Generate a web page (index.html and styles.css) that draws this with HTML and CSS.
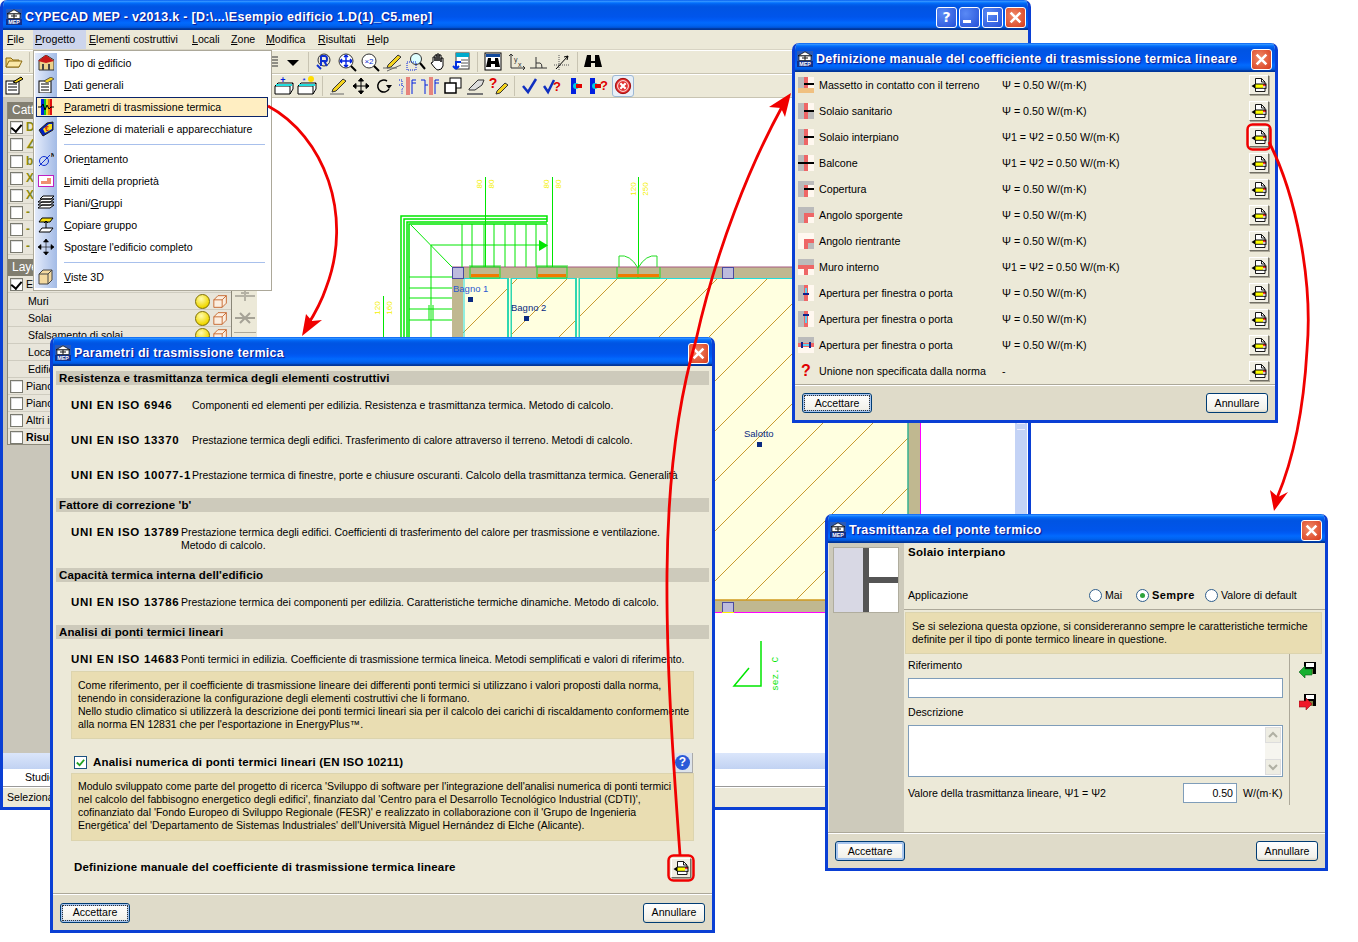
FILE: index.html
```html
<!DOCTYPE html>
<html lang="it">
<head>
<meta charset="utf-8">
<title>CYPECAD MEP</title>
<link rel="stylesheet" href="styles.css">
</head>
<body>
<svg class="defs" width="0" height="0">
  <defs>
    <symbol id="logo" viewBox="0 0 16 16">
      <rect x="0" y="0" width="16" height="16" fill="#2a5ab8"/>
      <path d="M8 .8 15 4.8H1Z" fill="#fff" stroke="#111" stroke-width=".8"/>
      <rect x="2" y="5" width="12" height="4.500" fill="#fff" stroke="#111" stroke-width=".7"/>
      <path d="M8 5v4.500M5 7h6" stroke="#111" stroke-width="1"/>
      <rect x="0" y="10" width="16" height="6" fill="#12308a"/>
      <text x="8" y="15" text-anchor="middle" font-family="Liberation Sans" font-size="5.400" font-weight="700" fill="#fff">MEP</text>
    </symbol>
    <symbol id="pen" viewBox="0 0 18 18">
      <path d="M5.500 2.500H11.500L15 6V15.500H5.500Z" fill="#fff" stroke="#000" stroke-width=".9"/>
      <path d="M11.500 2.500V6H15" fill="none" stroke="#000" stroke-width=".9"/>
      <path d="M1.500 10 5.500 7.500H16.500V12.800H5.500Z" fill="#000"/>
      <rect x="5.500" y="8.500" width="7.500" height="3.300" fill="#ff0"/>
      <rect x="13" y="8.500" width="2.500" height="1.700" fill="#f33"/>
      <rect x="13" y="10.200" width="2.500" height="1.600" fill="#fff"/>
    </symbol>
    <symbol id="cube" viewBox="0 0 18 18">
      <path d="M1 7 6 2H16V11L11 16H1Z" fill="#fbeee0" stroke="#c0581a"/>
      <path d="M1 7H11V16M11 7 16 2" fill="none" stroke="#c0581a"/>
    </symbol>
    <symbol id="tbh" viewBox="0 0 16 16">
      <rect width="16" height="16" fill="#fff8f0"/><rect width="6" height="16" fill="#bbb"/>
      <rect x="6" width="4" height="16" fill="#ee6666"/><rect x="6" y="7" width="10" height="2" fill="#000"/>
    </symbol>
    <symbol id="dlsave" viewBox="0 0 18 18">
      <rect x="5" y="1" width="12" height="12" fill="#000"/><rect x="7" y="2" width="8" height="4" fill="#fff"/><rect x="8" y="8" width="6" height="5" fill="#808040"/>
    </symbol>
    <symbol id="xmark" viewBox="0 0 12 12">
      <path d="M1.500 1.500 10.500 10.500M10.500 1.500 1.500 10.500" stroke="#fff" stroke-width="2.400" fill="none"/>
    </symbol>
  </defs>
</svg>

<main class="desktop">

  <!-- Main application window -->
  <section class="window main-win">
    <header class="titlebar main-title">
      <svg class="logo"><use href="#logo"/></svg>
      <span class="title-text">CYPECAD MEP - v2013.k - [D:\...\Esempio edificio 1.D(1)_C5.mep]</span>
      <span class="wbtns">
        <span class="wbtn blue">?</span>
        <span class="wbtn blue"><i class="min-g"></i></span>
        <span class="wbtn blue"><i class="max-g"></i></span>
        <span class="wbtn close"><svg class="xm"><use href="#xmark"/></svg></span>
      </span>
    </header>
    <nav class="menubar">
      <span class="mi m-file"><u>F</u>ile</span>
      <span class="mi m-prog active"><u>P</u>rogetto</span>
      <span class="mi m-elem"><u>E</u>lementi costruttivi</span>
      <span class="mi m-loc"><u>L</u>ocali</span>
      <span class="mi m-zone"><u>Z</u>one</span>
      <span class="mi m-mod"><u>M</u>odifica</span>
      <span class="mi m-ris"><u>R</u>isultati</span>
      <span class="mi"><u>H</u>elp</span>
    </nav>
    <div class="toolbar">
      <svg class="ti" viewBox="0 0 20 20"><path d="M2 6H7L9 8H15V15H2Z" fill="#f5d77a" stroke="#8a6a10"/><path d="M2 15 5 9H18L15 15Z" fill="#fbe9a8" stroke="#8a6a10"/></svg>
      <span class="sep"></span>
      <span class="tb-spacer1"></span>
      <svg class="ti narrow" viewBox="0 0 14 20"><path d="M0 5H12M0 8H12M0 11H12M0 14H12" stroke="#333"/></svg>
      <svg class="ti drop" viewBox="0 0 20 20"><path d="M4 8H16L10 14Z" fill="#000"/></svg>
      <span class="sep"></span>
      <svg class="ti" viewBox="0 0 20 20"><circle cx="10" cy="8" r="6" fill="none" stroke="#333"/><path d="M7 4V14M7 4H11Q13 4 13 7T11 9H7M10 9 13 14" fill="none" stroke="#1030d0" stroke-width="2"/><path d="M7 17 3 13" stroke="#1030d0" stroke-width="2"/></svg>
      <svg class="ti" viewBox="0 0 20 20"><circle cx="9" cy="9" r="7" fill="#fff" stroke="#333"/><path d="M9 3V15M3 9H15M9 3 7 5M9 3l2 2M9 15l-2-2M9 15l2-2M3 9l2-2M3 9l2 2M15 9l-2-2M15 9l-2 2" stroke="#0020e0" stroke-width="1.400" fill="none"/><path d="M14 14 19 19" stroke="#000" stroke-width="2"/></svg>
      <svg class="ti" viewBox="0 0 20 20"><circle cx="9" cy="9" r="7" fill="#fff" stroke="#333"/><text x="9" y="12" text-anchor="middle" font-family="Liberation Sans" font-size="8" fill="#1030d0">×2</text><path d="M14 14 19 19" stroke="#000" stroke-width="2"/></svg>
      <svg class="ti" viewBox="0 0 20 20"><path d="M5 13 15 3 18 5 8 15 4 16Z" fill="#f3d21e" stroke="#333"/><path d="M0 16H14M4 19 18 13" stroke="#666"/></svg>
      <svg class="ti" viewBox="0 0 20 20"><circle cx="10" cy="7" r="5.500" fill="#dff" stroke="#333"/><path d="M14 11 19 17" stroke="#000" stroke-width="2"/><rect x="1" y="10" width="9" height="8" fill="none" stroke="#0020e0" stroke-dasharray="1 1"/></svg>
      <svg class="ti" viewBox="0 0 20 20"><path d="M4 10V5h2v4V3h2v6V2h2v7V3h2v7V6h2v8q-1 4-5 4H9Q7 18 2 11Z" fill="#fff" stroke="#000"/></svg>
      <svg class="ti" viewBox="0 0 20 20"><rect x="4" y="1" width="13" height="16" fill="#fff" stroke="#333"/><rect x="4" y="1" width="13" height="4" fill="#0ac"/><path d="M9 8H16M9 11H16M9 14H16" stroke="#555"/><path d="M9 10H4V17M4 17 1 14M4 17 7 14" fill="none" stroke="#0030e0" stroke-width="2"/></svg>
      <span class="sep"></span>
      <svg class="ti" viewBox="0 0 20 20"><rect x="2" y="1" width="16" height="17" fill="#fff" stroke="#000"/><rect x="3" y="2" width="14" height="3" fill="#124a9c"/><path d="M5 6H8V9H12V6H15L17 15H12V12H8V15H3Z" fill="#000"/></svg>
      <svg class="ti" viewBox="0 0 20 20"><path d="M5 2V16H19M3 4 5 2l2 2M17 14l2 2-2 2" fill="none" stroke="#333"/><text x="8" y="10" font-family="Liberation Sans" font-size="7" fill="#333">y</text><text x="12" y="15" font-family="Liberation Sans" font-size="7" fill="#333">x</text></svg>
      <svg class="ti" viewBox="0 0 20 20"><path d="M1 16H18M7 5V16M7 11H11Q13 11 13 16" fill="none" stroke="#333"/></svg>
      <svg class="ti" viewBox="0 0 20 20"><path d="M2 13H18M7 3V18" stroke="#555" stroke-dasharray="1 1"/><path d="M4 17 16 4M16 4l-4 1M16 4l-1 4" stroke="#000" fill="none"/></svg>
      <span class="sep"></span>
      <svg class="ti" viewBox="0 0 20 20"><path d="M4 3H8V9H12V3H16L19 15H12V11H8V15H1Z" fill="#000"/></svg>
    </div>
    <div class="toolbar second">
      <svg class="ti" viewBox="0 0 20 20"><rect x="2" y="5" width="13" height="13" fill="#fff" stroke="#000"/><path d="M4 8H13M4 11H13M4 14H13" stroke="#000"/><path d="M9 6 17 1 19 3 12 7Z" fill="#f3d21e" stroke="#000"/></svg>
      <span class="tb-spacer2"></span>
      <svg class="ti" viewBox="0 0 20 20"><text x="9" y="7" text-anchor="middle" font-family="Liberation Sans" font-size="9" font-weight="700" fill="#0020e0">+</text><path d="M1 10 4 7H19V13L16 18H1Z" fill="#fff" stroke="#000"/><path d="M1 10H16V18M16 10 19 7" fill="none" stroke="#000"/><rect x="2" y="8" width="16" height="2" fill="#22dddd"/></svg>
      <svg class="ti" viewBox="0 0 20 20"><circle cx="14" cy="3" r="3" fill="#fd0"/><text x="7" y="7" text-anchor="middle" font-family="Liberation Sans" font-size="8" fill="#0020e0">*</text><path d="M1 10 4 7H19V13L16 18H1Z" fill="#fff" stroke="#000"/><path d="M1 10H16V18M16 10 19 7" fill="none" stroke="#000"/><rect x="2" y="8" width="16" height="2" fill="#22dddd"/></svg>
      <span class="sep"></span>
      <svg class="ti" viewBox="0 0 20 20"><path d="M5 13 15 3 18 5 8 15 4 16Z" fill="#f3d21e" stroke="#333"/><path d="M2 18H16" stroke="#666"/></svg>
      <svg class="ti" viewBox="0 0 20 20"><path d="M10 2V18M2 10H18M10 2 7.500 5H12.500ZM10 18 7.500 15H12.500ZM2 10 5 7.500V12.500ZM18 10 15 7.500V12.500Z" fill="#000" stroke="#000"/></svg>
      <svg class="ti" viewBox="0 0 20 20"><path d="M15 13A6 6 0 1 1 13 5" fill="none" stroke="#000" stroke-width="1.500"/><path d="M12 9H18L15 13Z" fill="#000"/></svg>
      <svg class="ti" viewBox="0 0 20 20"><path d="M2 4H5V9H2M5 9 7 11 5 13V18" fill="none" stroke="#0020e0" stroke-dasharray="1 1"/><path d="M10 1V19M12 1V19" stroke="#e02020"/><path d="M15 18V7H19M15 7V4H19" fill="none" stroke="#0020e0"/></svg>
      <svg class="ti" viewBox="0 0 20 20"><path d="M1 4H5V18M5 9H8" fill="none" stroke="#0020e0"/><path d="M10 1V19M12 1V19" stroke="#e02020"/><path d="M15 18V7H19M15 7V4H19" fill="none" stroke="#0020e0"/></svg>
      <svg class="ti" viewBox="0 0 20 20"><rect x="7" y="2" width="11" height="10" fill="#fff" stroke="#000"/><rect x="2" y="7" width="11" height="10" fill="#fff" stroke="#000" stroke-width="1.500"/></svg>
      <svg class="ti" viewBox="0 0 20 20"><path d="M3 13 12 4H18L16 9 9 14H3Z" fill="#ddd" stroke="#333"/><path d="M1 18H17" stroke="#777" stroke-width="2"/></svg>
      <svg class="ti" viewBox="0 0 20 20"><text x="4" y="12" text-anchor="middle" font-family="Liberation Sans" font-size="14" font-weight="700" fill="#e00000">?</text><path d="M8 15 16 7 19 9 11 17 7 18Z" fill="#f3d21e" stroke="#333"/></svg>
      <span class="sep"></span>
      <svg class="ti" viewBox="0 0 20 20"><path d="M3 10 8 16 16 3" fill="none" stroke="#1030c0" stroke-width="2.500"/></svg>
      <svg class="ti" viewBox="0 0 20 20"><path d="M1 10 5 16 11 4" fill="none" stroke="#1030c0" stroke-width="2.500"/><text x="14" y="15" text-anchor="middle" font-family="Liberation Sans" font-size="13" font-weight="700" fill="#e00000">?</text></svg>
      <svg class="ti" viewBox="0 0 20 20"><rect x="5" y="2" width="5" height="16" fill="#0020e0"/><circle cx="10" cy="10" r="3" fill="#0cd"/><rect x="10" y="8" width="6" height="4" fill="#e00000"/></svg>
      <svg class="ti" viewBox="0 0 20 20"><rect x="1" y="2" width="5" height="16" fill="#0020e0"/><circle cx="6" cy="10" r="3" fill="#0cd"/><rect x="6" y="8" width="6" height="4" fill="#e00000"/><text x="15" y="14" text-anchor="middle" font-family="Liberation Sans" font-size="13" font-weight="700" fill="#e00000">?</text></svg>
      <span class="stop-btn"><svg class="stop" viewBox="0 0 20 20"><circle cx="10" cy="10" r="8.500" fill="#e03030" stroke="#900"/><circle cx="10" cy="10" r="6" fill="none" stroke="#fff"/><path d="M7 7 13 13M13 7 7 13" stroke="#fff" stroke-width="2.500"/></svg></span>
    </div>

    <div class="work">
      <aside class="side">
        <div class="panel">
          <div class="panel-h">Cattura</div>
          <div class="prow"><i class="cb on"></i><b class="snap">D</b></div>
          <div class="prow"><i class="cb"></i><b class="snap">∠</b></div>
          <div class="prow"><i class="cb"></i><b class="snap">b</b></div>
          <div class="prow"><i class="cb"></i><b class="snap">X</b></div>
          <div class="prow"><i class="cb"></i><b class="snap">X</b></div>
          <div class="prow"><i class="cb"></i><b class="snap">-</b></div>
          <div class="prow"><i class="cb"></i><b class="snap">-</b></div>
          <div class="prow"><i class="cb"></i><b class="snap">-</b></div>
          <div class="panel-h gap">Layer</div>
          <div class="prow"><i class="cb on"></i><span>E</span></div>
          <div class="prow sub"><span>Muri</span><em class="bulb"></em><svg class="cubei"><use href="#cube"/></svg></div>
          <div class="prow sub"><span>Solai</span><em class="bulb"></em><svg class="cubei"><use href="#cube"/></svg></div>
          <div class="prow sub"><span>Sfalsamento di solai</span><em class="bulb"></em><svg class="cubei"><use href="#cube"/></svg></div>
          <div class="prow sub"><span>Locali</span></div>
          <div class="prow sub"><span>Edificio</span></div>
          <div class="prow"><i class="cb"></i><span>Piano</span></div>
          <div class="prow"><i class="cb"></i><span>Piano</span></div>
          <div class="prow"><i class="cb"></i><span>Altri impianti</span></div>
          <div class="prow"><i class="cb"></i><span class="strong">Risultati</span></div>
        </div>
        <div class="side-tools">
          <svg viewBox="0 0 20 12"><path d="M0 6H20M10 1V11M6 3H14" stroke="#b5b2a5" stroke-width="2"/></svg>
          <svg viewBox="0 0 20 12"><path d="M0 6H20M5 1 15 11M15 1 5 11" stroke="#a5a296" stroke-width="2"/></svg>
          <i class="side-line"></i>
        </div>
      </aside>

      <div class="canvas">
        <svg class="plan" viewBox="257 98 756 655" font-family="Liberation Sans">
          <defs>
            <clipPath id="room"><rect x="463" y="279" width="445" height="321"/></clipPath>
          </defs>
          <rect x="463" y="279" width="445" height="321" fill="#ffffe0"/>
          <path clip-path="url(#room)" fill="none" stroke="#c89a30" d="M0 796L796 0M0 846L846 0M0 896L896 0M0 946L946 0M0 996L996 0M0 1046L1046 0M0 1096L1096 0M0 1146L1146 0M0 1196L1196 0M0 1246L1246 0M0 1296L1296 0M0 1346L1346 0M0 1396L1396 0M0 1446L1446 0M0 1496L1496 0"/>
          <!-- walls -->
          <rect x="452" y="267" width="468" height="11" fill="#c0b890"/>
          <path d="M452 267H920" stroke="#a85a80"/>
          <rect x="452" y="267" width="11" height="400" fill="#c0b890"/>
          <rect x="908" y="267" width="12" height="345" fill="#c0b890"/>
          <rect x="452" y="600" width="468" height="12" fill="#c0b890"/>
          <path d="M463 600H908" stroke="#d09a1e" stroke-width="1.500"/>
          <path d="M452 612.500H921M920.500 278V612" stroke="#ff00ff"/>
          <path d="M908 278V600" stroke="#34b090" stroke-width="1.500"/>
          <path d="M463 278.500H908M464 278V400" stroke="#22dddd"/>
          <rect x="507" y="278" width="5" height="70" fill="#2fd7b0"/><rect x="509" y="278" width="1.500" height="70" fill="#ffffe0"/>
          <rect x="575" y="278" width="5" height="70" fill="#2fd7b0"/><rect x="577" y="278" width="1.500" height="70" fill="#ffffe0"/>
          <!-- columns -->
          <rect x="452.500" y="267.500" width="11" height="11" fill="#bdbbdd" stroke="#4a4aa0"/>
          <rect x="722.500" y="267.500" width="11" height="11" fill="#bdbbdd" stroke="#4a4aa0"/>
          <rect x="722.500" y="602.500" width="11" height="10" fill="#bdbbdd" stroke="#4a4aa0"/>
          <path d="M722 612.500H734" stroke="#ffee00"/>
          <!-- windows -->
          <g fill="none" stroke="#22dd22">
            <path d="M470 267V278H500V267ZM469 266H501M537 267V278H567V267ZM536 266H568"/>
            <path d="M617 267V278H660V267M638 267V278"/>
          </g>
          <path d="M471 275.500H499M538 275.500H566M618 275.500H659" stroke="#f07a00" stroke-width="3"/>
          <path d="M619 267V256Q630 254 638 268Q646 254 657 256V267" fill="none" stroke="#22dd22"/>
          <!-- stair -->
          <g fill="none" stroke="#00e600">
            <path d="M401 337V216H547V222M404 337V219H547M407 337V222H547M409 337V224H547" stroke-width="1.500"/>
            <path d="M462 224V267M472 224V267M484 224V267M494 224V267M505 224V267M515 224V267M526 224V267M536 224V267M547 224V267"/>
            <path d="M431 245H547M431 245V337M411 225 452 267"/>
            <path d="M409 277H452M409 288H452M409 298H452M409 309H452M409 320H452M429 305V320M433 305V320"/>
            <path d="M485.500 177V267M552.500 177V267M638.500 177V267M383.500 296V337"/>
          </g>
          <path d="M539 240 548 245.500 539 251Z" fill="#00e600"/>
          <g fill="#f4f000" font-size="8" text-anchor="middle">
            <text transform="translate(482 184) rotate(-90)">80</text>
            <text transform="translate(494 184) rotate(-90)">80</text>
            <text transform="translate(549 184) rotate(-90)">80</text>
            <text transform="translate(561 184) rotate(-90)">80</text>
            <text transform="translate(636 189) rotate(-90)">120</text>
            <text transform="translate(648 189) rotate(-90)">250</text>
            <text transform="translate(380 308) rotate(-90)">120</text>
            <text transform="translate(392 308) rotate(-90)">160</text>
          </g>
          <g fill="#0a2a80" font-size="9.500">
            <text x="453" y="292" fill="#2c5ad0">Bagno 1</text>
            <text x="511" y="311">Bagno 2</text>
            <text x="744" y="437">Salotto</text>
          </g>
          <path d="M468 297H473V302H468ZM524 316H529V321H524ZM757 442H762V447H757Z" fill="#0a2a80"/>
          <path d="M761 641V686H734L749 668" fill="none" stroke="#00e600" stroke-width="1.500"/>
          <text transform="translate(778 691) rotate(-90)" fill="#00e600" font-size="9.500" font-family="Liberation Mono">sez. C</text>
        </svg>
      </div>
      <div class="vscroll"><span class="grip"></span></div>
    </div>
    <div class="hscroll"></div>
    <div class="tabrow"><span class="tab">Studio</span></div>
    <div class="statusbar">Selezionare</div>
  </section>

  <!-- Open menu -->
  <div class="menu">
    <div class="menu-item"><svg class="mic" viewBox="0 0 16 16"><path d="M8 0 16 5V15H1V5Z" fill="#ecd18b" stroke="#333"/><path d="M0 6 8 0 16 6 8 8Z" fill="#c81818"/><path d="M4 9H6V15H4ZM10 9H12V15H10Z" fill="#444"/></svg><span>Tipo di <u>e</u>dificio</span></div>
    <div class="menu-item"><svg class="mic" viewBox="0 0 16 16"><rect x="1" y="4" width="12" height="12" fill="#fff" stroke="#000"/><path d="M3 7H11M3 10H11M3 13H11" stroke="#000"/><path d="M6 4 13 0 16 2 9 6Z" fill="#f3d21e" stroke="#555"/></svg><span><u>D</u>ati generali</span></div>
    <div class="menu-item hot"><svg class="mic" viewBox="0 0 16 16"><rect x="3" y="0" width="3" height="16" fill="#0020e0"/><rect x="6" width="2" height="16" fill="#10c030"/><rect x="8" width="2" height="16" fill="#e8e020"/><rect x="10" width="2" height="16" fill="#f08010"/><rect x="12" width="2" height="16" fill="#e01010"/><path d="M0 8H3L5 5 7 11 9 6 11 10 13 8H16" stroke="#000" fill="none"/></svg><span><u>P</u>arametri di trasmissione termica</span></div>
    <div class="menu-item"><svg class="mic" viewBox="0 0 16 16"><path d="M1 9 9 2 15 1V9L5 15Z" fill="#0020c0" stroke="#222"/><path d="M5 8 11 3 14 3V8L7 12Z" fill="#f8e020"/><text x="9" y="10" text-anchor="middle" font-family="Liberation Sans" font-size="7" font-weight="700" fill="#d01010">€</text></svg><span><u>S</u>elezione di materiali e apparecchiature</span></div>
    <hr class="menu-sep">
    <div class="menu-item"><svg class="mic" viewBox="0 0 16 16"><circle cx="6" cy="10" r="4.500" fill="none" stroke="#1030d0"/><path d="M1 15 12 4" stroke="#1030d0"/><text x="13" y="6" font-family="Liberation Sans" font-size="6" font-weight="700" fill="#000">N</text></svg><span>Orie<u>n</u>tamento</span></div>
    <div class="menu-item"><svg class="mic" viewBox="0 0 16 16"><rect x=".5" y="2.500" width="15" height="11" fill="#fff" stroke="#c020c0"/><path d="M3 11H13V5H9V8H3Z" fill="#f09070"/></svg><span><u>L</u>imiti della proprietà</span></div>
    <div class="menu-item"><svg class="mic" viewBox="0 0 16 16"><path d="M0 13 4 10H16L12 13ZM0 10 4 7H16L12 10ZM0 7 4 4H16L12 7ZM2 4 5 1H16L13 4Z" fill="#fff" stroke="#000"/></svg><span>Piani/<u>G</u>ruppi</span></div>
    <div class="menu-item"><svg class="mic" viewBox="0 0 16 16"><path d="M1 5 4 1H15L12 5Z" fill="#f8e010" stroke="#000"/><path d="M1 15 4 11H15L12 15Z" fill="#fff" stroke="#000"/><path d="M8 4V11M6 6 8 4 10 6" stroke="#000" fill="none"/></svg><span><u>C</u>opiare gruppo</span></div>
    <div class="menu-item"><svg class="mic" viewBox="0 0 16 16"><path d="M8 0V16M0 8H16M8 0 5.500 3H10.500ZM8 16 5.500 13H10.500ZM0 8 3 5.500V10.500ZM16 8 13 5.500V10.500Z" fill="#000" stroke="#000" stroke-width=".6"/></svg><span>Spost<u>a</u>re l'edificio completo</span></div>
    <hr class="menu-sep">
    <div class="menu-item"><svg class="mic" viewBox="0 0 16 16"><path d="M1 5 5 1H14V11L10 15H1Z" fill="#f4d9a0" stroke="#444"/><path d="M1 5H10V15M10 5 14 1" fill="none" stroke="#444"/></svg><span><u>V</u>iste 3D</span></div>
  </div>

  <!-- Dialog: Parametri -->
  <section class="window dlg param-dlg">
    <header class="titlebar">
      <svg class="logo"><use href="#logo"/></svg>
      <span class="title-text">Parametri di trasmissione termica</span>
      <span class="wbtn close dlg-close"><svg class="xm"><use href="#xmark"/></svg></span>
    </header>
    <div class="dlg-body">
      <div class="param-main">
        <h3 class="sec-h">Resistenza e trasmittanza termica degli elementi costruttivi</h3>
        <div class="norm n35 first-norm"><b class="code wide">UNI EN ISO 6946</b><span>Componenti ed elementi per edilizia. Resistenza e trasmittanza termica. Metodo di calcolo.</span></div>
        <div class="norm n35"><b class="code wide">UNI EN ISO 13370</b><span>Prestazione termica degli edifici. Trasferimento di calore attraverso il terreno. Metodi di calcolo.</span></div>
        <div class="norm n35"><b class="code wide">UNI EN ISO 10077-1</b><span>Prestazione termica di finestre, porte e chiusure oscuranti. Calcolo della trasmittanza termica. Generalità</span></div>
        <h3 class="sec-h s2">Fattore di correzione 'b'</h3>
        <div class="norm n2"><b class="code">UNI EN ISO 13789</b><span>Prestazione termica degli edifici. Coefficienti di trasferimento del calore per trasmissione e ventilazione.<br>Metodo di calcolo.</span></div>
        <h3 class="sec-h s3">Capacità termica interna dell'edificio</h3>
        <div class="norm n1"><b class="code">UNI EN ISO 13786</b><span>Prestazione termica dei componenti per edilizia. Caratteristiche termiche dinamiche. Metodo di calcolo.</span></div>
        <h3 class="sec-h s4">Analisi di ponti termici lineari</h3>
        <div class="norm n1"><b class="code">UNI EN ISO 14683</b><span>Ponti termici in edilizia. Coefficiente di trasmissione termica lineica. Metodi semplificati e valori di riferimento.</span></div>
        <div class="note n-a">Come riferimento, per il coefficiente di trasmissione lineare dei differenti ponti termici si utilizzano i valori proposti dalla norma,<br>tenendo in considerazione la configurazione degli elementi costruttivi che li formano.<br>Nello studio climatico si utilizzerà la descrizione dei ponti termici lineari sia per il calcolo dei carichi di riscaldamento conformemente<br>alla norma EN 12831 che per l'esportazione in EnergyPlus™.</div>
        <div class="check-row">
          <i class="xpcb"><svg viewBox="0 0 12 12"><path d="M2 6 5 9 10 3" fill="none" stroke="#21a121" stroke-width="2"/></svg></i>
          <b>Analisi numerica di ponti termici lineari (EN ISO 10211)</b>
          <span class="help"><em>?</em></span>
        </div>
        <div class="note n-b">Modulo sviluppato come parte del progetto di ricerca 'Sviluppo di software per l'integrazione dell'analisi numerica di ponti termici<br>nel calcolo del fabbisogno energetico degli edifici', finanziato dal 'Centro para el Desarrollo Tecnológico Industrial (CDTI)',<br>cofinanziato dal 'Fondo Europeo di Sviluppo Regionale (FESR)' e realizzato in collaborazione con il 'Grupo de Ingenieria<br>Energética' del 'Departamento de Sistemas Industriales' dell'Università Miguel Hernández di Elche (Alicante).</div>
        <div class="def-row">
          <b>Definizione manuale del coefficiente di trasmissione termica lineare</b>
          <span class="pbtn"><svg><use href="#pen"/></svg></span>
        </div>
      </div>
      <footer class="dlg-foot"><span class="btn default focus">Accettare</span><span class="btn">Annullare</span></footer>
    </div>
  </section>

  <!-- Dialog: Definizione manuale -->
  <section class="window dlg def-dlg">
    <header class="titlebar">
      <svg class="logo"><use href="#logo"/></svg>
      <span class="title-text">Definizione manuale del coefficiente di trasmissione termica lineare</span>
      <span class="wbtn close dlg-close"><svg class="xm"><use href="#xmark"/></svg></span>
    </header>
    <div class="dlg-body">
      <div class="def-list">
        <div class="drow"><svg class="tbi" viewBox="0 0 16 16"><rect width="16" height="16" fill="#fff8f0"/><rect width="6" height="11" fill="#bbb"/><rect x="6" width="4" height="11" fill="#ee6666"/><rect y="11" width="16" height="5" fill="#f0c080"/><rect x="6" y="6" width="10" height="2" fill="#000"/></svg><span class="dname">Massetto in contatto con il terreno</span><span class="dval">Ψ = 0.50 W/(m·K)</span><span class="pbtn"><svg><use href="#pen"/></svg></span></div>
        <div class="drow"><svg class="tbi" viewBox="0 0 16 16"><rect width="16" height="16" fill="#fff8f0"/><rect width="6" height="16" fill="#bbb"/><rect x="10" y="8" width="6" height="8" fill="#bbb"/><rect x="6" width="4" height="16" fill="#ee6666"/><rect x="6" y="7" width="10" height="2" fill="#000"/></svg><span class="dname">Solaio sanitario</span><span class="dval">Ψ = 0.50 W/(m·K)</span><span class="pbtn"><svg><use href="#pen"/></svg></span></div>
        <div class="drow"><svg class="tbi"><use href="#tbh"/></svg><span class="dname">Solaio interpiano</span><span class="dval">Ψ1 = Ψ2 = 0.50 W/(m·K)</span><span class="pbtn"><svg><use href="#pen"/></svg></span></div>
        <div class="drow"><svg class="tbi" viewBox="0 0 16 16"><rect width="16" height="16" fill="#fff8f0"/><rect width="6" height="16" fill="#bbb"/><rect x="6" width="4" height="16" fill="#ee6666"/><rect y="7" width="16" height="2" fill="#000"/></svg><span class="dname">Balcone</span><span class="dval">Ψ1 = Ψ2 = 0.50 W/(m·K)</span><span class="pbtn"><svg><use href="#pen"/></svg></span></div>
        <div class="drow"><svg class="tbi" viewBox="0 0 16 16"><rect width="16" height="16" fill="#fff8f0"/><rect width="6" height="16" fill="#bbb"/><rect width="16" height="4" fill="#bbb"/><rect x="6" y="4" width="4" height="12" fill="#ee6666"/><rect x="6" y="7" width="10" height="2" fill="#000"/></svg><span class="dname">Copertura</span><span class="dval">Ψ = 0.50 W/(m·K)</span><span class="pbtn"><svg><use href="#pen"/></svg></span></div>
        <div class="drow"><svg class="tbi" viewBox="0 0 16 16"><rect width="16" height="16" fill="#bbb"/><rect x="10" y="10" width="6" height="6" fill="#fff8f0"/><path d="M6 16V6H16V10H10V16Z" fill="#ee6666"/></svg><span class="dname">Angolo sporgente</span><span class="dval">Ψ = 0.50 W/(m·K)</span><span class="pbtn"><svg><use href="#pen"/></svg></span></div>
        <div class="drow"><svg class="tbi" viewBox="0 0 16 16"><rect width="16" height="16" fill="#fff8f0"/><rect x="10" y="10" width="6" height="6" fill="#bbb"/><path d="M6 16V6H16V10H10V16Z" fill="#ee6666"/></svg><span class="dname">Angolo rientrante</span><span class="dval">Ψ = 0.50 W/(m·K)</span><span class="pbtn"><svg><use href="#pen"/></svg></span></div>
        <div class="drow"><svg class="tbi" viewBox="0 0 16 16"><rect width="16" height="16" fill="#fff8f0"/><rect width="16" height="6" fill="#bbb"/><rect y="6" width="16" height="4" fill="#ee6666"/><rect x="6" y="10" width="4" height="6" fill="#ee6666"/></svg><span class="dname">Muro interno</span><span class="dval">Ψ1 = Ψ2 = 0.50 W/(m·K)</span><span class="pbtn"><svg><use href="#pen"/></svg></span></div>
        <div class="drow"><svg class="tbi" viewBox="0 0 16 16"><rect width="16" height="16" fill="#fff8f0"/><rect width="6" height="16" fill="#bbb"/><rect x="6" width="4" height="16" fill="#ee6666"/><rect x="7" y="3" width="2" height="6" fill="#5fd0f0"/><rect x="5" y="8" width="6" height="2" fill="#10208a"/></svg><span class="dname">Apertura per finestra o porta</span><span class="dval">Ψ = 0.50 W/(m·K)</span><span class="pbtn"><svg><use href="#pen"/></svg></span></div>
        <div class="drow"><svg class="tbi" viewBox="0 0 16 16"><rect width="16" height="16" fill="#fff8f0"/><rect width="6" height="16" fill="#bbb"/><rect x="6" width="4" height="16" fill="#ee6666"/><rect x="7" y="5" width="2" height="7" fill="#5fd0f0"/><rect x="5" y="3" width="6" height="2" fill="#10208a"/></svg><span class="dname">Apertura per finestra o porta</span><span class="dval">Ψ = 0.50 W/(m·K)</span><span class="pbtn"><svg><use href="#pen"/></svg></span></div>
        <div class="drow"><svg class="tbi" viewBox="0 0 16 16"><rect width="16" height="16" fill="#fff8f0"/><rect width="16" height="6" fill="#bbb"/><rect y="6" width="16" height="4" fill="#ee6666"/><rect x="4" y="7" width="8" height="2" fill="#5fd0f0"/><rect x="3" y="5" width="2" height="6" fill="#10208a"/><rect x="11" y="5" width="2" height="6" fill="#10208a"/></svg><span class="dname">Apertura per finestra o porta</span><span class="dval">Ψ = 0.50 W/(m·K)</span><span class="pbtn"><svg><use href="#pen"/></svg></span></div>
        <div class="drow"><span class="tbi qmark">?</span><span class="dname">Unione non specificata dalla norma</span><span class="dval">-</span><span class="pbtn"><svg><use href="#pen"/></svg></span></div>
      </div>
      <footer class="dlg-foot tight"><span class="btn default focus">Accettare</span><span class="btn">Annullare</span></footer>
    </div>
  </section>

  <!-- Dialog: Trasmittanza -->
  <section class="window dlg tras-dlg">
    <header class="titlebar">
      <svg class="logo"><use href="#logo"/></svg>
      <span class="title-text">Trasmittanza del ponte termico</span>
      <span class="wbtn close dlg-close"><svg class="xm"><use href="#xmark"/></svg></span>
    </header>
    <div class="dlg-body">
      <div class="tras-grid">
        <div class="tras-left"><div class="preview"><span class="pv-grey"></span><span class="pv-v"></span><span class="pv-h"></span></div></div>
        <div class="tras-right">
          <b class="tras-name">Solaio interpiano</b>
          <div class="appl">
            <span class="appl-label">Applicazione</span>
            <span class="radio r1"><i class="rd"></i>Mai</span>
            <span class="radio r2"><i class="rd on"></i><b>Sempre</b></span>
            <span class="radio"><i class="rd"></i>Valore di default</span>
          </div>
          <div class="note n-c">Se si seleziona questa opzione, si considereranno sempre le caratteristiche termiche<br>definite per il tipo di ponte termico lineare in questione.</div>
          <div class="fields">
            <div class="fields-main">
              <label class="flabel">Riferimento</label>
              <div class="inp"></div>
              <label class="flabel l2">Descrizione</label>
              <div class="txta"><span class="tscroll">
                <i><svg viewBox="0 0 14 14"><path d="M3 9 7 5 11 9" fill="none" stroke="#b0b0a4" stroke-width="2"/></svg></i>
                <i><svg viewBox="0 0 14 14"><path d="M3 5 7 9 11 5" fill="none" stroke="#b0b0a4" stroke-width="2"/></svg></i>
              </span></div>
              <div class="val-row"><span class="val-label">Valore della trasmittanza lineare, Ψ1 = Ψ2</span><span class="val-inp">0.50</span><span>W/(m·K)</span></div>
            </div>
            <div class="fields-side">
              <svg class="disk" viewBox="0 0 18 18"><use href="#dlsave"/><path d="M0 11 6 5V8H13V14H6V17Z" fill="#18b030" stroke="#0a6018" stroke-width=".6"/></svg>
              <svg class="disk" viewBox="0 0 18 18"><use href="#dlsave"/><path d="M13 11 7 5V8H0V14H7V17Z" fill="#f01828" stroke="#901018" stroke-width=".6"/></svg>
            </div>
          </div>
        </div>
      </div>
      <footer class="dlg-foot tight"><span class="btn default">Accettare</span><span class="btn">Annullare</span></footer>
    </div>
  </section>

  <!-- Callout arrows -->
  <svg class="callouts" viewBox="0 0 1358 942">
    <g fill="none" stroke="#f00000" stroke-width="2.800">
      <path d="M268 106C324 136 354 215 326 288 321 303 314 315 307 326"/>
      <path d="M680 855C665 650 655 480 696 340 716 250 750 165 783 105"/>
      <path d="M1269 142C1296 195 1313 280 1307 350 1303 420 1291 465 1277 498"/>
      <rect x="668.500" y="855.500" width="25" height="25" rx="5" stroke-width="2.500"/>
      <rect x="1247.500" y="124.500" width="23" height="25" rx="5" stroke-width="2.500"/>
    </g>
    <path d="M302 336 306 314 312 321 322 320ZM791 93 769 107 781 108 785 117ZM1274 511 1270 490 1278 497 1288 492Z" fill="#f00000"/>
  </svg>
</main>
</body>
</html>
```
FILE: styles.css
```css
* { box-sizing: border-box; }
html, body { margin: 0; padding: 0; background: #fff; }
body { width: 1358px; height: 942px; overflow: hidden; font: 10.600px/13px "Liberation Sans", Arial, sans-serif; color: #000; }
.defs { position: absolute; }
.desktop { position: relative; width: 1358px; height: 942px; background: #fff; }

/* Windows */
.window { position: absolute; display: flex; flex-direction: column; background: #ece9d8; border-radius: 7px 7px 0 0; overflow: hidden; border: solid #0a3fd4; border-width: 0 3px 3px; }
.main-win { left: 0; top: 0; width: 1031px; height: 810px; }
.param-dlg { left: 50px; top: 337px; width: 665px; height: 596px; }
.def-dlg { left: 792px; top: 43px; width: 486px; height: 380px; }
.tras-dlg { left: 825px; top: 514px; width: 503px; height: 357px; }

.titlebar {
  display: flex; align-items: center; flex: none; height: 29px; margin: 0 -3px; padding: 3px 5px 0 5px; color: #fff;
  background: linear-gradient(180deg,#0058ee 0,#3593ff 4%,#288eff 6%,#127dff 8%,#036ffc 10%,#0262ee 14%,#0057e5 20%,#0054e3 24%,#0055eb 56%,#005bf5 66%,#026afe 76%,#0062ef 86%,#0052d6 92%,#0040ab 94%,#003092 100%);
}
.main-title { height: 30px; padding: 4px 5px 0 6px; }
.logo { width: 16px; height: 16px; flex: none; margin-right: 3px; }
.title-text { font: 700 12.500px/16px "Liberation Sans", sans-serif; letter-spacing: .28px; text-shadow: 1px 1px 1px #0f1089; white-space: nowrap; }
.main-title .title-text { letter-spacing: .32px; }
.wbtns { margin-left: auto; display: flex; gap: 2px; }
.wbtn { display: flex; align-items: center; justify-content: center; width: 21px; height: 21px; border: 1px solid #fff; border-radius: 3px; color: #fff; font: 700 14px/1 "DejaVu Sans", sans-serif; }
.wbtn.blue { background: radial-gradient(circle at 30% 30%, #5a8af5, #2450d8); }
.wbtn.close { background: radial-gradient(circle at 40% 40%, #ef8a68, #d8391a); }
.xm { width: 13px; height: 13px; display: block; }
.dlg-close { margin-left: auto; margin-right: 1px; }
.min-g { display: block; width: 8px; height: 3px; background: #fff; margin: 8px 5px 0 0; }
.max-g { display: block; width: 11px; height: 10px; border: 1px solid #fff; border-top-width: 3px; }

/* Menu bar */
.menubar { display: flex; flex: none; height: 20px; align-items: center; border-bottom: 1px solid #d8d4c4; padding-left: 1px; }
.mi { padding: 0 3px; white-space: nowrap; flex: none; }
.mi.active { background: #cdd5ec; height: 19px; line-height: 19px; padding-left: 2px; }
.m-file { width: 29px; }
.m-prog { width: 53px; }
.m-elem { width: 103px; }
.m-loc { width: 39px; }
.m-zone { width: 35px; }
.m-mod { width: 52px; }
.m-ris { width: 49px; }

/* Toolbars */
.toolbar { display: flex; align-items: center; flex: none; height: 24px; padding-left: 1px; gap: 3px; border-top: 1px solid #fff; border-bottom: 1px solid #c8c4b2; }
.ti { flex: none; width: 20px; height: 20px; }
.ti.narrow { width: 14px; }
.sep { flex: none; width: 1px; height: 20px; background: #c8c4b2; margin: 0 2px; }
.tb-spacer1 { flex: none; width: 228px; }
.tb-spacer2 { flex: none; width: 244px; }
.stop-btn { display: flex; align-items: center; justify-content: center; flex: none; width: 22px; height: 22px; background: #e8f0f8; border: 1px solid #9db8d4; border-radius: 3px; }
.stop { width: 18px; height: 18px; }

/* Work area */
.work { display: flex; flex: 1; min-height: 0; }
.side { position: relative; flex: none; width: 254px; background: #c9c6ba; display: flex; }
.panel { position: relative; width: 225px; margin: 4px 0 0 4px; height: 343px; background: #e8e5da; border: 1px solid #8a8778; border-top: 0; overflow: hidden; }
.panel-h { height: 17px; line-height: 17px; padding-left: 4px; background: #817e70; color: #fff; font-size: 12px; }
.panel-h.gap { margin-top: 4px; }
.prow { display: flex; align-items: center; height: 17px; border-bottom: 1px solid #cfccc0; padding-left: 2px; white-space: nowrap; }
.prow.sub { padding-left: 20px; }
.cb { flex: none; width: 13px; height: 13px; margin-right: 3px; background: #fff; border: 1px solid #7a7a70; box-shadow: inset 1px 1px 0 #ddd; position: relative; }
.cb.on::after { content: ""; position: absolute; left: 2px; top: 0; width: 5px; height: 8px; border: solid #000; border-width: 0 2px 2px 0; transform: rotate(40deg); }
.snap { color: #8a8a10; font-size: 12px; }
.strong { font-weight: 700; }
.bulb { position: absolute; left: 187px; width: 15px; height: 15px; border-radius: 50%; background: radial-gradient(circle at 40% 30%, #fffbb0, #f0d800 70%, #a09000); border: 1px solid #807000; }
.cubei { position: absolute; left: 205px; width: 15px; height: 15px; }
.side-tools { position: absolute; left: 229px; top: 0; bottom: 0; width: 25px; padding-top: 192px; display: flex; flex-direction: column; gap: 10px; align-items: center; background: #ece9d8; }
.side-tools svg { width: 20px; height: 12px; flex: none; }
.side-line { display: block; width: 22px; height: 1px; background: #aca899; margin-top: -2px; }
.canvas { flex: 1; min-width: 0; background: #fff; overflow: hidden; }
.plan { display: block; width: 756px; height: 655px; }
.vscroll { position: relative; flex: none; width: 14px; background: #f4f3ee; }
.vscroll::before { content: ""; position: absolute; left: 0; top: 0; right: 0; bottom: 0; background: #c4d3f6; border: solid #fff; border-width: 0 1px; }
.grip { position: absolute; left: 3px; top: 325px; width: 8px; height: 7px; border: solid #eef; border-width: 1px 0; }
.hscroll { flex: none; height: 16px; background: linear-gradient(#dbe6fb,#c1d2f2); }
.tabrow { flex: none; height: 18px; background: #fff; border-bottom: 1px solid #999; padding-left: 18px; }
.tab { display: inline-block; padding: 2px 4px 0; }
.statusbar { flex: none; height: 20px; padding: 3px 4px; background: #ece9d8; border-top: 1px solid #fff; }

/* Menu */
.menu { position: absolute; left: 33px; top: 50px; width: 239px; height: 241px; padding: 1px 3px 2px 2px; background-color: #fff; background-image: linear-gradient(90deg,#e4ebfa,#a3bbe6); background-size: 22px calc(100% - 4px); background-position: 1px center; background-repeat: no-repeat; border: 1px solid #aca899; }
.menu-item { display: flex; align-items: center; height: 22px; position: relative; white-space: nowrap; }
.mic { flex: none; width: 16px; height: 16px; margin: 0 10px 0 2px; }
.menu-item.hot { background: #ffeec2; outline: 1px solid #0a246a; outline-offset: -1px; height: 20px; margin: 1px 0; }
.menu-sep { margin: 4px 3px 0 28px; border: 0; border-top: 1px solid #a8c0ec; height: 4px; }

/* Dialog body */
.dlg-body { display: flex; flex-direction: column; flex: 1; min-height: 0; }
.dlg-foot { flex: none; height: 36px; display: flex; justify-content: space-between; align-items: center; padding: 0 7px 0 7px; background: #dfdbc9; border-top: 1px solid #fff; box-shadow: 0 -1px 0 #aca899; }
.dlg-foot.tight { height: 35px; }
.btn { display: flex; align-items: center; justify-content: center; width: 62px; height: 20px; background: linear-gradient(#fff,#f2f1ea 85%,#dcd8c8); border: 1px solid #003c74; border-radius: 3px; }
.btn.default { width: 70px; box-shadow: inset 0 0 0 2px #a9c6ee; }
.btn.focus { outline: 1px dotted #333; outline-offset: -3px; }

/* Parametri */
.param-main { flex: 1; min-height: 0; padding: 5px 3px 0; font-size: 10.500px; }
.sec-h { margin: 0; height: 14px; line-height: 14px; padding-left: 3px; background: #cdcabb; font: 700 11.500px/14px "Liberation Sans", sans-serif; letter-spacing: .12px; }
.norm { display: flex; padding-left: 15px; white-space: nowrap; }
.n35 { height: 35px; padding-top: 6px; }
.first-norm { padding-top: 14px; height: 43px; }
.n2 { height: 56px; padding-top: 14px; }
.n1 { height: 43px; padding-top: 14px; }
.code { font: 700 11.500px/13px "Liberation Sans", sans-serif; letter-spacing: .7px; flex: none; width: 110px; }
.code.wide { width: 121px; }
.note { background: #e9ddb2; border: 1px solid #dcd4ae; padding: 7px 0 0 6px; white-space: nowrap; }
.n-a { margin: -11px 15px 0 15px; height: 68px; }
.check-row { position: relative; display: flex; align-items: center; height: 34px; padding: 12px 0 0 18px; white-space: nowrap; }
.check-row b { font: 700 11.500px/13px "Liberation Sans", sans-serif; letter-spacing: .2px; }
.xpcb { flex: none; width: 13px; height: 13px; margin-right: 6px; background: #fff; border: 1px solid #1c5180; }
.xpcb svg { display: block; width: 11px; height: 11px; }
.help { position: absolute; left: 617px; top: 14px; width: 20px; height: 20px; background: #dde3ea; border: solid #aaa; border-width: 0 1px 1px 0; display: flex; align-items: center; justify-content: center; }
.help em { display: block; width: 15px; height: 15px; border-radius: 50%; background: #2a5ad8; color: #fff; font: 700 12px/15px "Liberation Sans", sans-serif; text-align: center; }
.n-b { margin: 0 15px; height: 68px; padding-top: 6px; }
.def-row { display: flex; justify-content: space-between; align-items: center; padding: 0 18px 0 18px; height: 53px; }
.def-row b { font: 700 11.500px/13px "Liberation Sans", sans-serif; letter-spacing: .17px; white-space: nowrap; }
.pbtn { flex: none; display: flex; align-items: center; justify-content: center; width: 20px; height: 20px; background: #f0eee2; border: 1px solid; border-color: #fff #716f64 #716f64 #fff; box-shadow: 1px 1px 0 #aca899; }
.pbtn svg { width: 18px; height: 18px; }

/* Definizione */
.def-list { flex: 1; padding: 0 6px 0 3px; font-size: 10.700px; }
.drow { display: flex; align-items: center; height: 26px; white-space: nowrap; }
.tbi { flex: none; width: 16px; height: 16px; margin-right: 5px; }
.qmark { color: #e00000; font: 700 16px/16px "Liberation Sans", sans-serif; text-align: center; }
.dname { flex: none; width: 183px; }
.dval { flex: 1; }

/* Trasmittanza */
.tras-grid { flex: 1; display: flex; min-height: 0; }
.tras-left { flex: none; width: 75px; margin-left: 1px; background: #cdcabb; padding: 4px; }
.preview { position: relative; width: 66px; height: 66px; background: #fff; border: 1px solid #b0ad9e; }
.pv-grey { position: absolute; left: 0; top: 0; bottom: 0; width: 29px; background: #d8d8e4; }
.pv-v { position: absolute; left: 29px; top: 0; bottom: 0; width: 6px; background: #555; }
.pv-h { position: absolute; left: 35px; right: 0; top: 29px; height: 6px; background: #555; }
.tras-right { flex: 1; display: flex; flex-direction: column; padding: 3px 0 0; min-width: 0; }
.tras-name { display: block; padding-left: 4px; height: 38px; font: 700 11.500px/13px "Liberation Sans", sans-serif; letter-spacing: .25px; }
.appl { display: flex; align-items: center; height: 26px; padding: 0 0 3px 4px; border-bottom: 1px solid #aca899; white-space: nowrap; }
.appl-label { flex: none; width: 181px; }
.radio { display: flex; align-items: center; flex: none; }
.radio b { font: 700 11px/13px "Liberation Sans", sans-serif; letter-spacing: .4px; }
.r1 { width: 47px; }
.r2 { width: 69px; }
.rd { width: 13px; height: 13px; margin-right: 3px; border: 1px solid #2f5e8c; border-radius: 50%; background: #fff; display: block; position: relative; }
.rd.on::after { content: ""; position: absolute; left: 3px; top: 3px; width: 5px; height: 5px; border-radius: 50%; background: #2fa33a; }
.n-c { margin: 2px 3px 0 1px; flex: none; height: 42px; padding: 7px 0 0 6px; font-size: 10.550px; }
.fields { flex: 1; display: flex; min-height: 0; }
.fields-main { flex: none; width: 386px; padding: 0 0 0 4px; border-right: 1px solid #aca899; height: 151px; }
.flabel { display: block; height: 24px; padding-top: 5px; }
.flabel.l2 { height: 27px; padding-top: 8px; }
.inp { height: 20px; background: #fff; border: 1px solid #7f9db9; width: 375px; }
.txta { position: relative; height: 52px; background: #fff; border: 1px solid #7f9db9; width: 375px; }
.tscroll { position: absolute; right: 1px; top: 1px; bottom: 1px; width: 16px; background: #f6f5ef; display: flex; flex-direction: column; justify-content: space-between; }
.tscroll i { display: block; height: 16px; background: #eeede3; border: 1px solid #ddd; }
.tscroll svg { display: block; width: 14px; height: 14px; }
.val-row { display: flex; align-items: center; height: 20px; margin-top: 6px; white-space: nowrap; }
.val-label { flex: none; width: 275px; }
.val-inp { flex: none; width: 54px; height: 20px; line-height: 18px; background: #fff; border: 1px solid #7f9db9; text-align: right; padding-right: 3px; margin-right: 6px; }
.fields-side { flex: 1; display: flex; flex-direction: column; align-items: center; padding-top: 7px; gap: 14px; }
.disk { width: 18px; height: 18px; }

/* Callouts */
.callouts { position: absolute; left: 0; top: 0; width: 1358px; height: 942px; pointer-events: none; }
```
